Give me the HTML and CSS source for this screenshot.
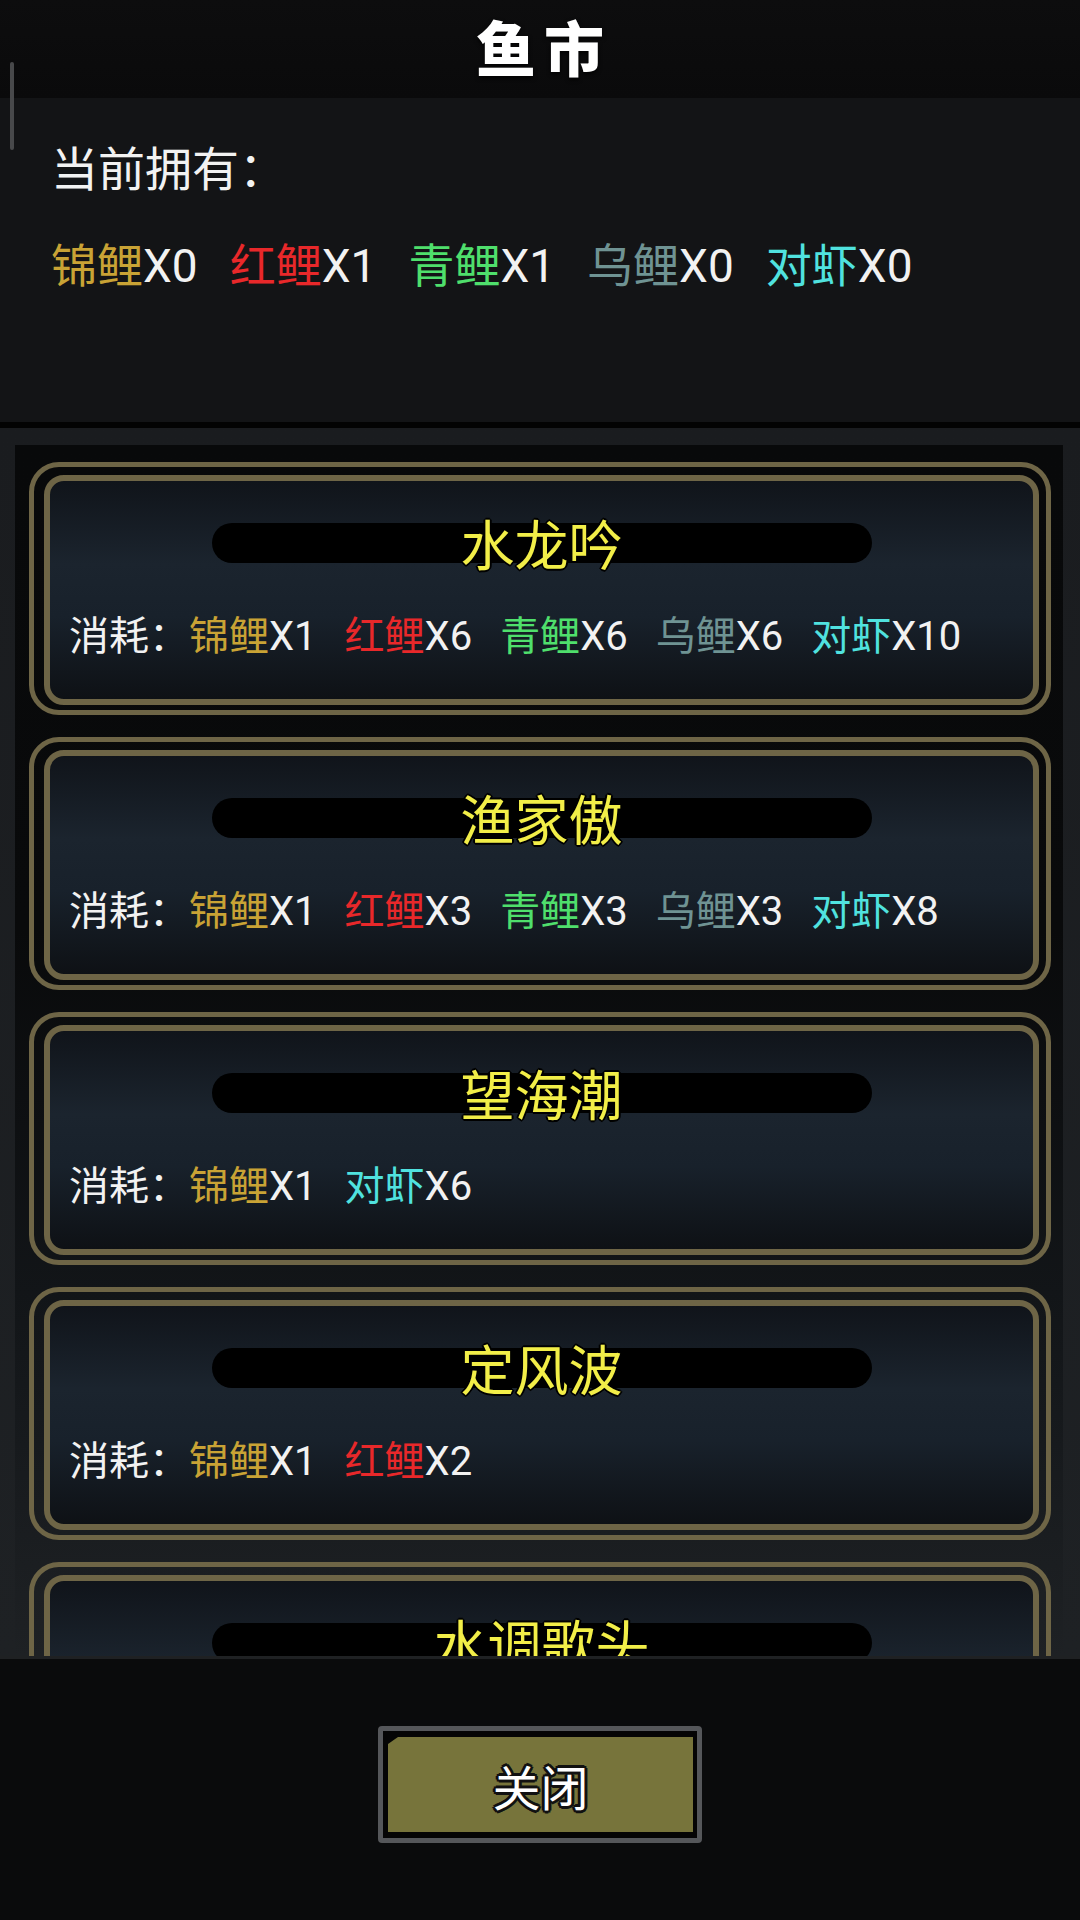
FILE: index.html
```html
<!DOCTYPE html>
<html lang="zh-CN">
<head>
    <meta charset="UTF-8">
    <meta name="viewport" content="width=device-width, initial-scale=1.0">
    <title>鱼市</title>
    <link rel="stylesheet" href="styles.css">
</head>
<body>
    <div class="top">
        <h1>鱼市</h1>
    </div>
    <div class="scroll-thumb"></div>

    <div class="own">
        <p class="own-label">当前拥有：</p>
        <div class="fish-row">
            <span><span class="jin">锦鲤</span>X0</span>
            <span><span class="hong">红鲤</span>X1</span>
            <span><span class="qing">青鲤</span>X1</span>
            <span><span class="wu">乌鲤</span>X0</span>
            <span><span class="xia">对虾</span>X0</span>
        </div>
    </div>

    <div class="list-wrap">
        <div class="list">
            <div class="card">
                <div class="card-in">
                    <div class="name">水龙吟</div>
                    <div class="cost">
                        <span>消耗：</span>
                        <span class="item"><span class="jin">锦鲤</span>X1</span>
                        <span class="item"><span class="hong">红鲤</span>X6</span>
                        <span class="item"><span class="qing">青鲤</span>X6</span>
                        <span class="item"><span class="wu">乌鲤</span>X6</span>
                        <span class="item"><span class="xia">对虾</span>X10</span>
                    </div>
                </div>
            </div>
            <div class="card">
                <div class="card-in">
                    <div class="name">渔家傲</div>
                    <div class="cost">
                        <span>消耗：</span>
                        <span class="item"><span class="jin">锦鲤</span>X1</span>
                        <span class="item"><span class="hong">红鲤</span>X3</span>
                        <span class="item"><span class="qing">青鲤</span>X3</span>
                        <span class="item"><span class="wu">乌鲤</span>X3</span>
                        <span class="item"><span class="xia">对虾</span>X8</span>
                    </div>
                </div>
            </div>
            <div class="card">
                <div class="card-in">
                    <div class="name">望海潮</div>
                    <div class="cost">
                        <span>消耗：</span>
                        <span class="item"><span class="jin">锦鲤</span>X1</span>
                        <span class="item"><span class="xia">对虾</span>X6</span>
                    </div>
                </div>
            </div>
            <div class="card">
                <div class="card-in">
                    <div class="name">定风波</div>
                    <div class="cost">
                        <span>消耗：</span>
                        <span class="item"><span class="jin">锦鲤</span>X1</span>
                        <span class="item"><span class="hong">红鲤</span>X2</span>
                    </div>
                </div>
            </div>
            <!-- 最后一项被底部挡住，只露出标题 -->
            <div class="card">
                <div class="card-in">
                    <div class="name">水调歌头</div>
                </div>
            </div>
        </div>
    </div>

    <div class="bottom">
        <div class="btn">
            <div class="btn-face">关闭</div>
        </div>
    </div>
</body>
</html>
```

FILE: styles.css
```css
* {
    margin: 0;
    padding: 0;
    box-sizing: border-box;
}
body {
    width: 1080px;
    height: 1920px;
    background-color: #0a0b0c;
    font-family: Roboto, "Noto Sans CJK SC", sans-serif;
    color: #f2f2f2;
    display: flex;
    flex-direction: column;
    overflow: hidden;
    position: relative;
}

/* 顶部标题 */
.top {
    height: 98px;
    flex-shrink: 0;
    background: linear-gradient(#0d0d0e, #0a0a0b);
    display: flex;
    justify-content: center;
    align-items: center;
    padding-top: 6px;
}
.top h1 {
    font-size: 60px;
    font-weight: 900;
    line-height: 1;
    letter-spacing: 8px;
    padding-left: 8px;
    color: #fff;
    text-shadow: 0 2px 4px rgba(0, 0, 0, 0.9);
}
/* 左上角的滚动条 */
.scroll-thumb {
    position: absolute;
    left: 10px;
    top: 62px;
    width: 4px;
    height: 88px;
    border-radius: 2px;
    background-color: #48494b;
}

/* 当前拥有 */
.own {
    height: 324px;
    flex-shrink: 0;
    background-color: #131416;
    padding: 44px 0 0 51px;
    font-size: 46px;
    line-height: 55px;
}
.own-label {
    font-size: 47px;
}
.fish-row {
    display: flex;
    gap: 32px;
    margin-top: 42px;
}

.jin { color: #c9a335; }
.hong { color: #e8282a; }
.qing { color: #4fdf6c; }
.wu { color: #6f9393; }
.xia { color: #50e2df; }

/* 列表 */
.list-wrap {
    flex: 1;
    min-height: 0;
    border-top: 6px solid #030303;
    background: linear-gradient(#1a1c1f, #1e2124);
    padding: 17px 17px 0 15px;
    overflow: hidden;
}
.list {
    height: 100%;
    /* 越往下越亮，跟截图里的底部渐变一致 */
    background: linear-gradient(#08090a 0%, #090a0b 40%, #121518 70%, #1e2124 100%);
    padding: 17px 12px 0 14px;
    display: flex;
    flex-direction: column;
    gap: 22px;
}
.card {
    flex-shrink: 0;
    border: 5px solid #6e6546;
    border-radius: 30px;
    padding: 8px 7px 5px 10px;
}
.card-in {
    height: 230px;
    border: 6px solid #6e6546;
    border-radius: 20px;
    background: linear-gradient(#10141a 0%, #1b242e 38%, #18212b 62%, #0e1115 100%);
    padding-top: 42px;
}
.name {
    width: 660px;
    height: 40px;
    margin: 0 auto;
    border-radius: 20px;
    background-color: #000;
    text-align: center;
    font-size: 54px;
    line-height: 50px;
    color: #f2ee48;
    text-shadow: 2px 0 #000, -2px 0 #000, 0 2px #000, 0 -2px #000,
        1px 1px #000, -1px -1px #000, 1px -1px #000, -1px 1px #000;
}
.cost {
    display: flex;
    margin: 50px 0 0 19px;
    font-size: 40px;
    line-height: 48px;
}
.cost .item {
    margin-right: 28px;
}

/* 底部按钮 */
.bottom {
    height: 264px;
    flex-shrink: 0;
    border-top: 3px solid #1f2123;
    background-color: #0a0b0c;
    display: flex;
    justify-content: center;
    padding-top: 67px;
}
.btn {
    width: 324px;
    height: 117px;
    border: 5px solid #55575a;
    border-radius: 4px;
    background-color: #050505;
    padding: 6px 4px 6px 5px;
}
.btn-face {
    height: 100%;
    background-color: #77743b;
    clip-path: polygon(10px 0, 100% 0, 100% 100%, 0 100%, 0 7px);
    display: flex;
    justify-content: center;
    align-items: center;
    font-size: 48px;
    color: #fff;
    text-shadow: 3px 0 #111, -3px 0 #111, 0 3px #111, 0 -3px #111,
        2px 2px #111, -2px -2px #111, 2px -2px #111, -2px 2px #111;
}
```
